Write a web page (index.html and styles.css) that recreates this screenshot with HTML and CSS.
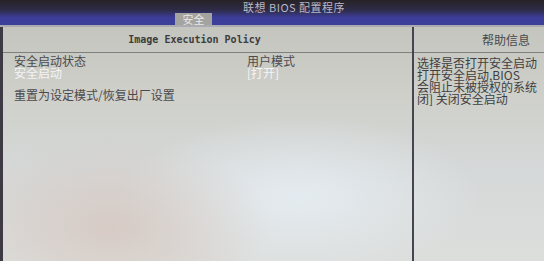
FILE: index.html
```html
<!DOCTYPE html>
<html lang="zh">
<head>
  <meta charset="UTF-8" />
  <title>联想 BIOS 配置程序</title>
  <link rel="stylesheet" href="styles.css">
</head>
<body>
  <div class="topbar">
    <div class="title">联想 BIOS 配置程序</div>
    <div class="tabs">
      <span class="tab">安全</span>
    </div>
  </div>

  <div class="screen">
    <div class="left">
      <div class="head">Image Execution Policy</div>
      <div class="items">
        <div class="row">
          <span class="label">安全启动状态</span>
          <span class="value">用户模式</span>
        </div>
        <div class="row active">
          <span class="label">安全启动</span>
          <span class="value">[打开]</span>
        </div>
        <div class="row gap">
          <span class="label">重置为设定模式/恢复出厂设置</span>
        </div>
      </div>
    </div>

    <div class="right">
      <div class="head help-head">帮助信息</div>
      <div class="help">
        选择是否打开安全启动<br>
        打开安全启动,BIOS<br>
        会阻止未被授权的系统<br>
        闭] 关闭安全启动
      </div>
    </div>
  </div>
</body>
</html>
```

FILE: styles.css
```css
body {
  margin: 0;
  width: 544px;
  height: 261px;
  overflow: hidden;
  font-family: "Noto Sans CJK SC", "DejaVu Sans", sans-serif;
  background: #cfd0cb;
}

.topbar {
  height: 25px;
  background: linear-gradient(180deg, #262326 0%, #2e2b48 40%, #3b3d98 70%, #3c3f9a 100%);
  border-bottom: 2px solid #a9abb0;
  position: relative;
}

.title {
  position: absolute;
  left: 243px;
  top: 1px;
  font-size: 11px;
  line-height: 12px;
  color: #b9b7c4;
  letter-spacing: 0.5px;
}

.tabs {
  display: flex;
  padding-left: 175px;
  padding-top: 13px;
}

.tab {
  width: 37px;
  height: 12px;
  line-height: 12px;
  background: #a3a39f;
  color: #e9e9ec;
  font-size: 11px;
  text-align: center;
}

.screen {
  display: flex;
  height: 234px;
  background:
    radial-gradient(ellipse 160px 90px at 110px 200px, rgba(214, 196, 188, 0.7), rgba(214, 196, 188, 0)),
    radial-gradient(ellipse 180px 80px at 300px 170px, rgba(232, 240, 246, 0.8), rgba(232, 240, 246, 0)),
    linear-gradient(180deg, #c3c5be 0%, #cfd0ca 30%, #d5d8d8 60%, #dcdedc 100%);
}

.left {
  width: 409px;
  border-left: 3px solid #3d3a44;
  border-right: 2px solid #45444f;
}

.right {
  flex: 1;
}

.head {
  height: 25px;
  line-height: 25px;
  border-bottom: 1px solid #7f807e;
  color: #3d3d3f;
}

.left .head {
  font-family: "DejaVu Sans Mono", monospace;
  font-weight: bold;
  font-size: 10px;
  text-align: center;
  padding-right: 26px;
}

.help-head {
  font-size: 12px;
  text-align: right;
  padding-right: 14px;
  color: #4a4a4c;
}

.items {
  padding: 2px 0 0 11px;
}

.row {
  display: flex;
  height: 12px;
  line-height: 12px;
  font-size: 12px;
  color: #4b4a4f;
}

.row .label {
  width: 233px;
}

.row.active {
  color: #f4f4f6;
}

.row.gap {
  margin-top: 10px;
}

.help {
  padding: 4px 0 0 3px;
  font-size: 12px;
  line-height: 12px;
  color: #3f3f42;
  white-space: nowrap;
}
```
